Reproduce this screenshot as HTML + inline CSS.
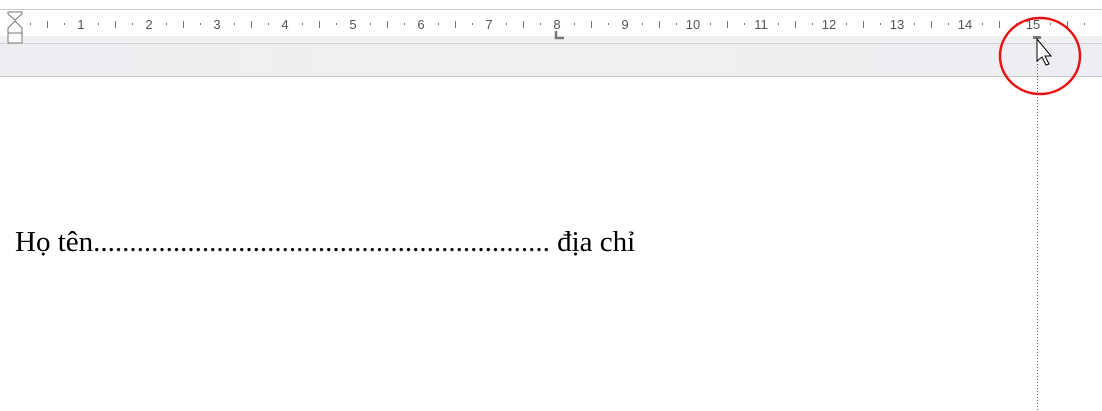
<!DOCTYPE html><html><head><style>
body{margin:0;width:1102px;height:411px;overflow:hidden;background:#fff;position:relative;font-family:"Liberation Sans",sans-serif}
.top{position:absolute;left:0;top:0;width:1102px;height:9px;background:#fff;border-bottom:1px solid #c8c8c8}
.ruler{position:absolute;left:0;top:10px;width:1102px;height:26px;background:#fff;overflow:hidden}
.band{position:absolute;left:0;width:1102px;background:linear-gradient(90deg,#eceef2,#f1eeee 40%,#eceef3);border-top:1px solid #d4d4d4;border-bottom:1px solid #c9c9c9;box-sizing:border-box;top:43px;height:34px}
.band0{position:absolute;left:0;top:36px;width:1102px;height:7px;background:#f0f0f2}
.n{position:absolute;top:7px;font-size:13px;color:#555;width:20px;text-align:center;margin-left:-10px;line-height:15px}
.t{position:absolute;background:#777;width:1px}
.txt{position:absolute;left:15px;top:226px;font-family:"Liberation Serif",serif;font-size:29px;line-height:33px;color:#000;white-space:nowrap}
</style></head><body>
<div class="top"></div><div class="ruler" id="r"></div><div class="band0"></div><div class="band"></div>
<svg style="position:absolute;left:0;top:0" width="1102" height="411">
<path d="M8 12h14v2l-7 6-7-6z M8 33v-5l7-7 7 7v5z M8 33h14v10h-14z" fill="#fff" stroke="#777" stroke-width="1"/>
<path d="M556 31v7h8" fill="none" stroke="#777" stroke-width="2.5"/>
<rect x="1033" y="36" width="8" height="3" fill="#777"/>
<line x1="1037.5" y1="40" x2="1037.5" y2="411" stroke="#666" stroke-dasharray="1 2"/>
<path d="M1037 39v22l5-4 4 8 3-1-4-8 6 0z" fill="#fff" stroke="#000" stroke-width="1"/>
<ellipse cx="1040" cy="56" rx="40" ry="38" fill="none" stroke="#e81010" stroke-width="2.5"/>
</svg>
<div class="txt">Họ tên............................................................... địa chỉ</div>
<script>
var r=document.getElementById('r'),h='';
for(var k=0;k<70;k++){var x=13+17*k;if(x<20||x>1100)continue;var m=k%4;
if(m==0){var n=k/4;h+='<div class="n" style="left:'+x+'px">'+n+'</div>';}
else if(m==2)h+='<div class="t" style="left:'+x+'px;top:11px;height:7px"></div>';
else h+='<div class="t" style="left:'+x+'px;top:13px;height:2px"></div>';}
r.innerHTML=h;
</script>
</body></html>
